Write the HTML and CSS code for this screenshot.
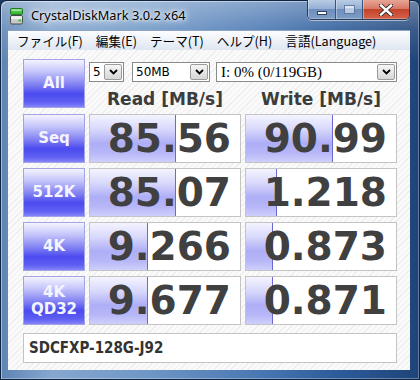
FILE: index.html
```html
<!DOCTYPE html>
<html lang="ja">
<head>
<meta charset="utf-8">
<title>CrystalDiskMark 3.0.2 x64</title>
<link rel="stylesheet" href="styles.css">
</head>
<body>
<div class="window">
  <div class="titlebar">
    <svg class="app-icon" width="13" height="17" viewBox="0 0 13 17">
      <rect x="0.5" y="0.5" width="12" height="6" rx="1" fill="#3dbb3d" stroke="#1f7a22"/>
      <rect x="1.5" y="1.2" width="10" height="2" fill="#9be89b"/>
      <rect x="0.5" y="7.5" width="12" height="8.5" rx="1.5" fill="#c9c9c9" stroke="#4a4a4a"/>
      <rect x="1.2" y="8.2" width="10.6" height="3" fill="#f0f0f0"/>
      <rect x="8.5" y="11.5" width="2.5" height="2" fill="#2ec42e"/>
    </svg>
    <span class="title">CrystalDiskMark 3.0.2 x64</span>
    <div class="caption-buttons">
      <div class="cbtn cmin"><span class="glyph-min"></span></div>
      <div class="cbtn cmax"><span class="glyph-max"></span></div>
      <div class="cbtn cclose">
        <svg width="14" height="12" viewBox="0 0 14 12">
          <path d="M2 1.5 L12 10.5 M12 1.5 L2 10.5" stroke="#3a2a2a" stroke-width="4.2" stroke-linecap="square"/>
          <path d="M2 1.5 L12 10.5 M12 1.5 L2 10.5" stroke="#ffffff" stroke-width="2.4" stroke-linecap="square"/>
        </svg>
      </div>
    </div>
  </div>
  <div class="menubar">
    <span class="menu-item">ファイル(F)</span>
    <span class="menu-item">編集(E)</span>
    <span class="menu-item">テーマ(T)</span>
    <span class="menu-item">ヘルプ(H)</span>
    <span class="menu-item">言語(Language)</span>
  </div>
  <div class="client">
    <div class="grid">
      <div class="label-btn all">All</div>
      <div class="top-right">
        <div class="selects">
          <div class="combo combo-count"><span class="combo-val">5</span><span class="drop"><svg width="9" height="6" viewBox="0 0 9 6"><path d="M1 1 L4.5 4.5 L8 1" fill="none" stroke="#000" stroke-width="1.8"/></svg></span></div>
          <div class="combo combo-size"><span class="combo-val">50MB</span><span class="drop"><svg width="9" height="6" viewBox="0 0 9 6"><path d="M1 1 L4.5 4.5 L8 1" fill="none" stroke="#000" stroke-width="1.8"/></svg></span></div>
          <div class="combo combo-drive"><span class="combo-val serif">I: 0% (0/119GB)</span><span class="drop"><svg width="9" height="6" viewBox="0 0 9 6"><path d="M1 1 L4.5 4.5 L8 1" fill="none" stroke="#000" stroke-width="1.8"/></svg></span></div>
        </div>
        <div class="headers">
          <div class="col-head">Read [MB/s]</div>
          <div class="col-head">Write [MB/s]</div>
        </div>
      </div>

      <div class="label-btn">Seq</div>
      <div class="cell"><div class="bar" style="width:86px"></div><div class="num">85.56</div></div>
      <div class="cell"><div class="bar" style="width:87px"></div><div class="num">90.99</div></div>

      <div class="label-btn">512K</div>
      <div class="cell"><div class="bar" style="width:86px"></div><div class="num">85.07</div></div>
      <div class="cell"><div class="bar" style="width:31px"></div><div class="num">1.218</div></div>

      <div class="label-btn">4K</div>
      <div class="cell"><div class="bar" style="width:58px"></div><div class="num">9.266</div></div>
      <div class="cell"><div class="bar" style="width:27px"></div><div class="num">0.873</div></div>

      <div class="label-btn two-line">4K<br>QD32</div>
      <div class="cell"><div class="bar" style="width:58px"></div><div class="num">9.677</div></div>
      <div class="cell"><div class="bar" style="width:27px"></div><div class="num">0.871</div></div>
    </div>
    <div class="comment">SDCFXP-128G-J92</div>
  </div>
</div>
</body>
</html>
```

FILE: styles.css
```css
* { box-sizing: border-box; margin: 0; padding: 0; }
html, body { width: 420px; height: 380px; overflow: hidden; background: #1d3a63; }

.window {
  width: 420px;
  height: 380px;
  border: 1px solid #10233f;
  border-radius: 7px 7px 0 0;
  padding: 0 9px 9px 7px;
  display: flex;
  flex-direction: column;
  background:
    linear-gradient(180deg, rgba(255,255,255,.35) 0, rgba(255,255,255,.12) 28px, rgba(255,255,255,0) 60px),
    linear-gradient(90deg, #5d84b4 0%, #86a7cf 12%, #6f97c6 35%, #4977b2 62%, #2d5c9a 80%, #1f4479 100%);
  box-shadow: inset 1px 1px 0 rgba(255,255,255,.45), inset -1px -1px 0 rgba(255,255,255,.3);
}

/* title bar */
.titlebar {
  height: 29px;
  display: flex;
  align-items: flex-start;
  flex-shrink: 0;
}
.app-icon { margin: 7px 0 0 2px; flex-shrink: 0; }
.title {
  margin: 6px 0 0 8px;
  font: 12.8px/16px "Noto Sans", "DejaVu Sans", sans-serif;
  color: #000;
  text-shadow: 0 0 6px #fff, 0 0 10px rgba(255,255,255,.9), 0 0 3px rgba(255,255,255,.9);
  flex: 1;
}
.caption-buttons {
  display: flex;
  margin-top: -1px;
  height: 20px;
  border: 1px solid #2c3d58;
  border-top: none;
  border-radius: 0 0 5px 5px;
  overflow: hidden;
  box-shadow: 0 1px 0 rgba(255,255,255,.5);
}
.cbtn {
  height: 100%;
  display: flex;
  align-items: center;
  justify-content: center;
  box-shadow: inset 1px 0 0 rgba(255,255,255,.35), inset 0 -1px 0 rgba(255,255,255,.25);
}
.cmin, .cmax {
  width: 28px;
  background: linear-gradient(180deg, #b9cce4 0%, #95b0d4 45%, #6e8fbd 50%, #7d9dc8 100%);
  border-right: 1px solid #3c5478;
}
.cmax { width: 27px; }
.cclose {
  width: 46px;
  background: linear-gradient(180deg, #e6a596 0%, #d77965 45%, #c4432c 50%, #d4634a 100%);
}
.glyph-min {
  width: 10px; height: 4px;
  margin-top: 6px;
  background: #fff;
  border: 1px solid #2d3f5c;
}
.glyph-max {
  width: 11px; height: 9px;
  border: 1px solid #5a7299;
  background: #c7d6ea;
  box-shadow: inset 0 2px 0 #eaf0f8;
  opacity: .85;
}

/* menu */
.menubar {
  height: 20px;
  flex-shrink: 0;
  display: flex;
  align-items: center;
  padding-left: 3px;
  background: linear-gradient(180deg, #fbfcfe 0%, #eef2f8 50%, #dee6f1 100%);
  border-top: 1px solid #8fa4c2;
}
.menu-item {
  padding: 0 6px;
  font: 12.6px/18px "Noto Sans CJK JP", "Noto Sans", sans-serif;
  color: #000;
}
.menu-item + .menu-item { margin-left: 1px; }

/* client */
.client {
  flex: 1;
  padding: 9px 0 0 15px;
  background: repeating-linear-gradient(135deg, #fafafa 0px, #fafafa 3px, #eeeeee 3px, #eeeeee 4px);
}
.grid {
  display: grid;
  grid-template-columns: 62px 152px 152px;
  grid-template-rows: 50px repeat(4, 49px);
  column-gap: 4px;
  row-gap: 5px;
}
.label-btn {
  display: flex;
  align-items: center;
  justify-content: center;
  text-align: center;
  font: bold 15px/17px "DejaVu Sans", sans-serif;
  color: #f4f4ff;
  border: 1px solid #a4a4e4;
  background: linear-gradient(180deg, #f4f4ff 0%, #c4c4fa 25%, #7a7af2 55%, #4a4aef 72%, #6060f3 90%, #8484fa 100%);
}
.label-btn.all { height: 49px; }

.top-right {
  grid-column: 2 / span 2;
  display: flex;
  flex-direction: column;
}
.selects {
  display: flex;
  margin-top: 3px;
  height: 20px;
}
.combo {
  display: flex;
  height: 20px;
  border: 1px solid #8a8a8a;
  background: #fff;
}
.combo-count { width: 35px; }
.combo-size { width: 78px; margin-left: 8px; }
.combo-drive { width: 181px; margin-left: 6px; }
.combo-val {
  flex: 1;
  padding-left: 3px;
  font: 12px/18px "DejaVu Sans", sans-serif;
  color: #000;
  white-space: nowrap;
  overflow: hidden;
}
.combo-val.serif {
  padding-left: 4px;
  font: 15px/18px "Liberation Serif", serif;
}
.drop {
  width: 18px;
  margin: 1px;
  border: 1px solid #9c9c9c;
  border-radius: 2px;
  background: linear-gradient(180deg, #f6f6f6 0%, #e6e6e6 50%, #d6d6d6 100%);
  display: flex;
  align-items: center;
  justify-content: center;
}
.headers {
  display: grid;
  grid-template-columns: 152px 152px;
  column-gap: 4px;
  margin-top: 7px;
}
.col-head {
  text-align: center;
  font: bold 17px/20px "DejaVu Sans", sans-serif;
  color: #3c3c3c;
  white-space: nowrap;
}

.cell {
  display: grid;
  border: 1px solid #c4c4c4;
  background: #fff;
}
.bar {
  grid-area: 1 / 1;
  height: 100%;
  border-right: 1px solid #6a6ad0;
  background: linear-gradient(180deg, #f4f4ff 0%, #d8d8fc 30%, #aeaef6 60%, #b6b6f8 80%, #cfcffc 100%);
}
.num {
  grid-area: 1 / 1;
  justify-self: end;
  align-self: center;
  padding-right: 9px;
  font: bold 39px/1 "DejaVu Sans", sans-serif;
  color: #404040;
}

.comment {
  margin-top: 8px;
  width: 374px;
  height: 30px;
  border: 1px solid #c4c4c4;
  background: #fff;
  padding-left: 5px;
  font: bold 15px/28px "DejaVu Sans Condensed", "DejaVu Sans", sans-serif;
  font-stretch: condensed;
  color: #333;
}
```
